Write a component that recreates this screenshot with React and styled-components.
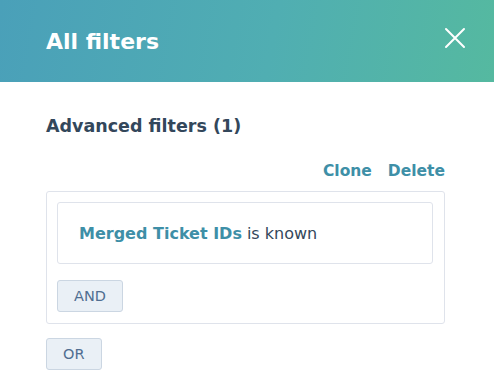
import styled, { createGlobalStyle } from "styled-components";

const Global = createGlobalStyle`
body {
  margin: 0;
  background: #ffffff;
  font-family: 'DejaVu Sans', 'Noto Sans', sans-serif;
}
`

export default function App() {
    return (
        <Panel>
            <Global />
            <Header>
                <Title>All filters</Title>
                <CloseBtn aria-label="Close">
                    <svg width="22" height="22" viewBox="0 0 22 22">
                        <path d="M2 2 L20 20 M20 2 L2 20" stroke="#ffffff" strokeWidth="2" strokeLinecap="round" />
                    </svg>
                </CloseBtn>
            </Header>
            <Body>
                <Subtitle>Advanced filters (1)</Subtitle>
                <Actions>
                    <LinkBtn>Clone</LinkBtn>
                    <LinkBtn>Delete</LinkBtn>
                </Actions>
                <Group>
                    <Rule>
                        <Property>Merged Ticket IDs</Property> is known
                    </Rule>
                    <Pill>AND</Pill>
                </Group>
                <OrPill>OR</OrPill>
            </Body>
        </Panel>
    );
}

const Panel = styled.div`
width: 494px;
height: 392px;
overflow: hidden;
`

const Header = styled.div`
height: 82px;
display: flex;
align-items: center;
justify-content: space-between;
padding: 0 28px 0 46px;
box-sizing: border-box;
background: linear-gradient(100deg, #4aa0b9 0%, #50aeb2 55%, #55b9a0 100%);
`

const Title = styled.h1`
margin: 0;
font-size: 22px;
font-weight: 700;
color: #ffffff;
`

const CloseBtn = styled.div`
width: 22px;
height: 22px;
display: flex;
margin-bottom: 7px;
`

const Body = styled.div`
padding: 32px 49px 0 46px;
display: flex;
flex-direction: column;
align-items: flex-start;
`

const Subtitle = styled.h2`
margin: 0;
font-size: 17.5px;
line-height: 25px;
font-weight: 700;
color: #33475b;
`

const Actions = styled.div`
align-self: flex-end;
display: flex;
gap: 16px;
margin-top: 21px;
`

const LinkBtn = styled.span`
font-size: 15.5px;
line-height: 22px;
font-weight: 700;
color: #3e8fa7;
`

const Group = styled.div`
align-self: stretch;
margin-top: 9px;
border: 1px solid #dfe3eb;
border-radius: 3px;
padding: 10px 11px 11px 10px;
display: flex;
flex-direction: column;
align-items: flex-start;
gap: 16px;
`

const Rule = styled.div`
align-self: stretch;
height: 62px;
box-sizing: border-box;
border: 1px solid #dfe3eb;
border-radius: 3px;
padding: 0 21px;
display: flex;
align-items: center;
gap: 5px;
font-size: 16px;
color: #33475b;
`

const Property = styled.span`
font-weight: 700;
color: #3e8fa7;
`

const Pill = styled.div`
height: 32px;
box-sizing: border-box;
padding: 0 16px;
display: flex;
align-items: center;
background: #eaf0f6;
border: 1px solid #cbd6e2;
border-radius: 3px;
font-size: 14.5px;
color: #506e91;
`

const OrPill = styled(Pill)`
margin-top: 14px;
`
